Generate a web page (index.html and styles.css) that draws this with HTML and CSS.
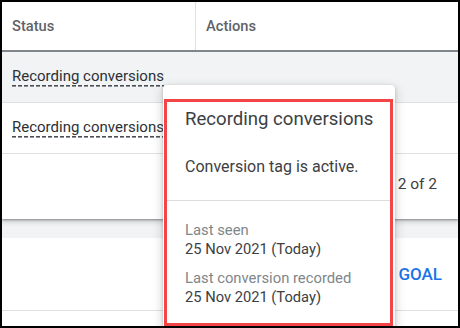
FILE: index.html
```html
<!DOCTYPE html>
<html>
<head>
<meta charset="utf-8">
<link rel="stylesheet" href="styles.css">
</head>
<body>
<div class="frame">
  <div class="table-card">
    <div class="thead">
      <div class="th th-status">Status</div>
      <div class="th th-actions">Actions</div>
    </div>
    <div class="row row-hover"><span class="status">Recording conversions</span></div>
    <div class="row"><span class="status">Recording conversions</span></div>
    <div class="pager">2 of 2</div>
  </div>
  <div class="goal-card">
    <div class="goal-bar"><span class="goal-btn">GOAL</span></div>
  </div>
  <div class="popup">
    <div class="highlight">
      <div class="pop-title">Recording conversions</div>
      <div class="pop-desc">Conversion tag is active.</div>
      <div class="pop-divider"></div>
      <div class="pop-meta">
        <div class="meta-group">
          <div class="meta-label">Last seen</div>
          <div class="meta-value">25 Nov 2021 (Today)</div>
        </div>
        <div class="meta-group">
          <div class="meta-label">Last conversion recorded</div>
          <div class="meta-value">25 Nov 2021 (Today)</div>
        </div>
      </div>
    </div>
  </div>
</div>
</body>
</html>
```

FILE: styles.css
```css
* { box-sizing: border-box; }
html, body { margin: 0; padding: 0; }
body {
  font-family: Roboto, "Liberation Sans", Arial, sans-serif;
  color: #3c4043;
  background: #000;
}
.frame {
  width: 460px;
  height: 328px;
  border: 2px solid #000;
  background: #f1f3f4;
  position: relative;
  overflow: hidden;
}
.table-card {
  background: #fff;
  box-shadow: 0 1px 2px rgba(60,64,67,.5), 0 2px 5px 1px rgba(60,64,67,.2);
  position: relative;
}
.thead {
  display: flex;
  height: 50px;
  border-bottom: 2px solid #80868b;
}
.th {
  font-size: 14.7px;
  font-weight: 500;
  color: #5f6368;
  display: flex;
  align-items: center;
  padding-left: 10px;
}
.th-status { width: 193px; }
.th-actions { flex: 1; border-left: 1px solid #e0e0e0; }
.row {
  height: 51px;
  border-bottom: 1px solid #e0e0e0;
  display: flex;
  align-items: center;
  padding-left: 10px;
}
.row-hover { background: #f1f3f4; }
.status {
  font-size: 15px;
  line-height: 18px;
  padding-bottom: 2px;
  color: #2d3033;
  background-image: repeating-linear-gradient(to right, #4a4e52 0 4px, transparent 4px 6px);
  background-size: 100% 1.6px;
  background-repeat: no-repeat;
  background-position: 0 100%;
}
.pager {
  height: 65px;
  padding-top: 20px;
  padding-right: 21px;
  text-align: right;
  font-size: 15.5px;
  line-height: 20px;
  color: #3c4043;
}
.goal-card {
  margin-top: 19px;
  background: #fff;
  height: 100px;
}
.goal-bar {
  height: 73px;
  border-bottom: 1px solid #e0e0e0;
  display: flex;
  justify-content: flex-end;
  align-items: center;
  padding-right: 16px;
}
.goal-btn {
  font-size: 17px;
  font-weight: 500;
  color: #1a73e8;
}
.popup {
  position: absolute;
  left: 161px;
  top: 83px;
  width: 232px;
  height: 260px;
  background: #fff;
  border-radius: 4px;
  box-shadow: 0 1px 3px rgba(60,64,67,.3), 0 4px 8px 3px rgba(60,64,67,.15);
  padding: 14px 2px 0 1px;
}
.highlight {
  border: 3px solid #f34545;
  height: 227px;
}
.pop-title {
  font-size: 18.6px;
  line-height: 24px;
  padding: 5px 0 0 18px;
  color: #3c4043;
}
.pop-desc {
  font-size: 16px;
  line-height: 20px;
  padding-left: 18px;
  margin-top: 26px;
  color: #3c4043;
}
.pop-divider {
  height: 1px;
  background: #dadce0;
  margin-top: 23px;
}
.pop-meta {
  padding: 20px 0 0 18px;
  display: flex;
  flex-direction: column;
  gap: 10px;
}
.meta-label {
  font-size: 14.8px;
  line-height: 19px;
  color: #80868b;
}
.meta-value {
  font-size: 14.7px;
  line-height: 19px;
  color: #3c4043;
}
```
